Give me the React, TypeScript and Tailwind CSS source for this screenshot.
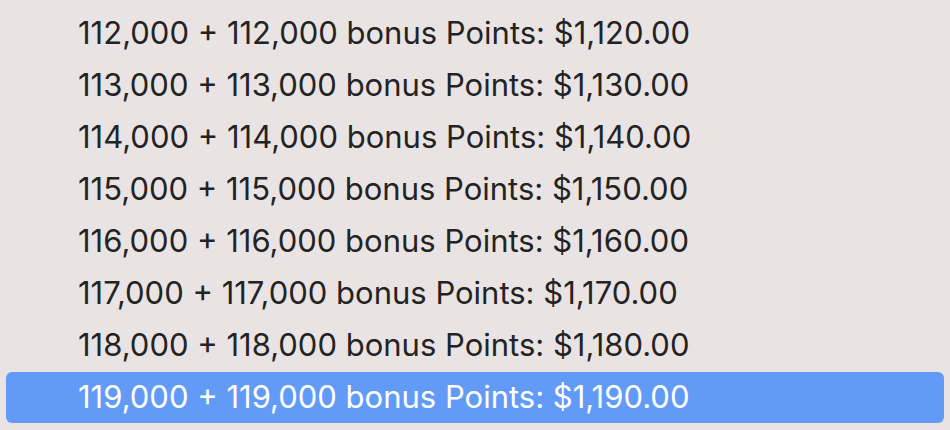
const rows = [112, 113, 114, 115, 116, 117, 118, 119]

export default function App() {
  return (
    <div className="w-[950px] h-[430px] bg-[#e9e3e3] pt-[7px] px-[6px] overflow-hidden [font-family:Inter,'Noto_Sans',sans-serif]">
      {rows.map((n, i) => {
        const selected = i === rows.length - 1
        return (
          <div
            key={n}
            className={
              selected
                ? "h-[51px] mt-[1px] flex items-center pl-[72px] rounded-[6px] bg-[#629af8] text-white text-[31px]"
                : "h-[52px] flex items-center pl-[72px] text-[#232323] text-[31px]"
            }
          >
            {n},000 + {n},000 bonus Points: $1,{n - 100}0.00
          </div>
        )
      })}
    </div>
  )
}
